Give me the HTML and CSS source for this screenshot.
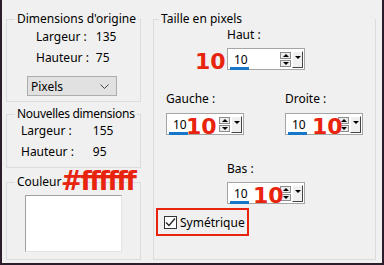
FILE: index.html
```html
<!DOCTYPE html>
<html lang="fr">
<head>
    <meta charset="UTF-8">
    <title>Ajouter des bordures</title>
    <link rel="stylesheet" href="styles.css">
</head>
<body>

    <div class="window">
        <div class="col-left">
            <div class="group group-origin">
                <div class="group-title">Dimensions d'origine</div>
                <div class="info info-origin">
                    <span>Largeur :</span><span>135</span>
                    <span>Hauteur :</span><span>75</span>
                </div>
                <div class="select">
                    <span>Pixels</span>
                    <svg width="9" height="5" viewBox="0 0 9 5"><path d="M0.5 0.5 L4.5 4.5 L8.5 0.5" fill="none" stroke="#444" stroke-width="1"/></svg>
                </div>
            </div>

            <div class="group group-new">
                <div class="group-title">Nouvelles dimensions</div>
                <div class="info info-new">
                    <span>Largeur :</span><span>155</span>
                    <span>Hauteur :</span><span>95</span>
                </div>
            </div>

            <div class="group group-color">
                <div class="group-title">Couleur</div>
                <span class="note note-color">#ffffff</span>
                <div class="swatch"></div>
            </div>
        </div>

        <div class="group group-size">
            <div class="group-title title-size">Taille en pixels</div>

            <div class="field field-top">
                <label>Haut :</label>
                <div class="spin">
                    <span class="note mark mark-top">10</span>
                    <div class="spin-text"><span class="spin-value">10</span></div>
                    <div class="spin-arrows">
                        <span class="arrow arrow-up"></span>
                        <span class="arrow arrow-down"></span>
                    </div>
                    <div class="spin-drop"><span class="drop-tri"></span></div>
                </div>
            </div>

            <div class="side-row">
                <div class="field">
                    <label>Gauche :</label>
                    <div class="spin">
                        <div class="spin-text"><span class="spin-value">10</span></div>
                        <div class="spin-arrows">
                            <span class="arrow arrow-up"></span>
                            <span class="arrow arrow-down"></span>
                        </div>
                        <div class="spin-drop"><span class="drop-tri"></span></div>
                        <span class="note mark mark-left">10</span>
                    </div>
                </div>
                <div class="field">
                    <label>Droite :</label>
                    <div class="spin">
                        <div class="spin-text"><span class="spin-value">10</span></div>
                        <div class="spin-arrows">
                            <span class="arrow arrow-up"></span>
                            <span class="arrow arrow-down"></span>
                        </div>
                        <div class="spin-drop"><span class="drop-tri"></span></div>
                        <span class="note mark mark-right">10</span>
                    </div>
                </div>
            </div>

            <div class="field field-bottom">
                <label>Bas :</label>
                <div class="spin">
                    <div class="spin-text"><span class="spin-value">10</span></div>
                    <div class="spin-arrows">
                        <span class="arrow arrow-up"></span>
                        <span class="arrow arrow-down"></span>
                    </div>
                    <div class="spin-drop"><span class="drop-tri"></span></div>
                    <span class="note mark mark-bottom">10</span>
                </div>
            </div>

            <div class="check-frame">
                <span class="checkbox">
                    <svg width="11" height="11" viewBox="0 0 11 11"><path d="M1 5.5 L4 8.5 L10 1.5" fill="none" stroke="#222" stroke-width="1.3"/></svg>
                </span>
                <span>Symétrique</span>
            </div>
        </div>
    </div>

</body>
</html>
```

FILE: styles.css
```css
body {
    margin: 0;
    padding: 0;
    font-family: "Noto Sans", "Open Sans", sans-serif;
    font-size: 12px;
    color: #000;
    background-color: #f0f0f0;
}
.window {
    width: 384px;
    height: 265px;
    box-sizing: border-box;
    background-color: #f0f0f0;
    border-left: 2px solid #2c1d2b;
    border-right: 2px solid #2c1d2b;
    border-bottom: 2px solid #2c1d2b;
    padding: 19px 0 0 4px;
    display: flex;
    gap: 12px;
}

/* group boxes */
.group {
    border: 1px solid #dcdcdc;
    box-sizing: border-box;
    position: relative;
}
.group-title {
    display: table;
    margin: -9px 0 0 8px;
    padding: 0 2px;
    line-height: 16px;
    white-space: nowrap;
    background-color: #f0f0f0;
}
.col-left {
    width: 135px;
    display: flex;
    flex-direction: column;
}
.group-origin {
    height: 83px;
}
.group-new {
    height: 54px;
    margin-top: 12px;
}
.group-new .group-title {
    letter-spacing: -0.3px;
}
.group-color {
    height: 78px;
    margin-top: 14px;
}
.info {
    display: grid;
    grid-template-columns: auto auto;
    justify-content: start;
    row-gap: 5px;
    line-height: 16px;
}
.info-origin {
    margin: 2px 0 0 29px;
    column-gap: 7px;
}
.info-new {
    margin: 1px 0 0 14px;
    column-gap: 19px;
}
.select {
    margin: 10px 0 0 20px;
    width: 90px;
    height: 20px;
    box-sizing: border-box;
    border: 1px solid #adadad;
    background-color: #e1e1e1;
    display: flex;
    align-items: center;
    justify-content: space-between;
    padding: 0 7px 0 3px;
}
.swatch {
    margin: 5px 0 0 18px;
    width: 97px;
    height: 57px;
    box-sizing: border-box;
    background-color: #fff;
    border-left: 1px solid #a0a0a0;
    border-top: 1px solid #a0a0a0;
    border-right: 1px solid #e3e3e3;
    border-bottom: 1px solid #e3e3e3;
}

/* red annotations */
.note {
    position: absolute;
    color: #e8230e;
    font-family: "DejaVu Sans", sans-serif;
    font-weight: bold;
    line-height: 1;
}
.note-color {
    left: 54px;
    top: -15px;
    font-size: 26px;
    letter-spacing: -2.3px;
}
.mark {
    font-size: 22px;
    top: 2px;
}
.mark-top {
    left: -33px;
}
.mark-left {
    left: 19px;
}
.mark-right {
    left: 26px;
}
.mark-bottom {
    left: 25px;
}

/* size panel */
.group-size {
    width: 223px;
    height: 241px;
    display: flex;
    flex-direction: column;
}
.title-size {
    margin-left: 5px;
}
.field label {
    display: block;
    line-height: 16px;
    margin-bottom: 5px;
}
.field-top {
    margin: 0 0 0 73px;
}
.side-row {
    display: flex;
    gap: 41px;
    margin: 21px 0 0 12px;
}
.side-row label {
    margin-bottom: 6px;
}
.field-bottom {
    margin: 26px 0 0 73px;
}
.spin {
    position: relative;
    width: 78px;
    height: 22px;
    box-sizing: border-box;
    border: 1px solid #a5a5a5;
    background-color: #fff;
    display: flex;
    align-items: flex-start;
    padding: 2px 1px 0 1px;
}
.spin-text {
    flex: 1;
    padding-left: 1px;
}
.spin-value {
    display: inline-block;
    width: 19px;
    padding-left: 4px;
    box-sizing: border-box;
    line-height: 15px;
    border-bottom: 3px solid #1677c9;
}
.spin-arrows {
    display: flex;
    flex-direction: column;
    gap: 1px;
    margin-top: 1px;
}
.arrow {
    width: 11px;
    height: 7px;
    box-sizing: border-box;
    border: 1px solid #8c8c8c;
    background-color: #ececec;
    position: relative;
}
.arrow::after {
    content: "";
    position: absolute;
    left: 2px;
    border-left: 3px solid transparent;
    border-right: 3px solid transparent;
}
.arrow-up::after {
    top: 1px;
    border-bottom: 3px solid #000;
}
.arrow-down::after {
    top: 1px;
    border-top: 3px solid #000;
}
.spin-drop {
    width: 11px;
    height: 17px;
    margin-left: 1px;
    box-sizing: border-box;
    background-color: #f0f0f0;
    border-top: 1px solid #fff;
    border-left: 1px solid #fff;
    border-right: 1px solid #444;
    border-bottom: 1px solid #444;
    display: flex;
    justify-content: center;
    padding-top: 4px;
}
.drop-tri {
    width: 0;
    height: 0;
    border-left: 3px solid transparent;
    border-right: 3px solid transparent;
    border-top: 3px solid #000;
}
.check-frame {
    margin: 4px 0 0 2px;
    width: 93px;
    height: 28px;
    box-sizing: border-box;
    border: 2px solid #e8230e;
    display: flex;
    align-items: center;
    gap: 3px;
    padding-left: 6px;
}
.checkbox {
    width: 13px;
    height: 13px;
    box-sizing: border-box;
    border: 1px solid #333;
    background-color: #fff;
    display: flex;
    align-items: center;
    justify-content: center;
}
```
